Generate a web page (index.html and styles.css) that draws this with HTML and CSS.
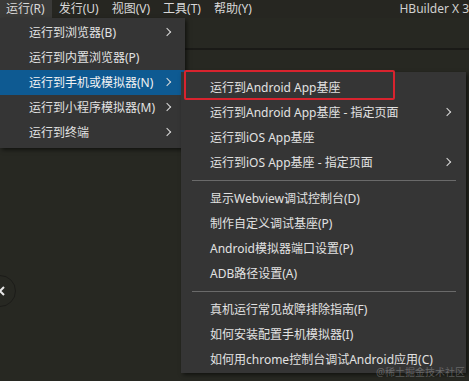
FILE: index.html
```html
<!DOCTYPE html>
<html lang="zh-CN">
    <head>
        <title>HBuilder X</title>
        <meta charset="utf-8">
        <link rel="stylesheet" href="styles.css">
    </head>
    <body>
        <header class="menubar">
            <span class="menubar-item open">运行(R)</span>
            <span class="menubar-item">发行(U)</span>
            <span class="menubar-item">视图(V)</span>
            <span class="menubar-item">工具(T)</span>
            <span class="menubar-item">帮助(Y)</span>
            <span class="app-title">HBuilder X 3</span>
        </header>
        <div class="toolbar"></div>
        <main class="workspace">
            <div class="side-toggle">
                <svg width="8" height="10" viewBox="0 0 8 10"><polyline points="6,1 2,5 6,9" fill="none" stroke="#e8e8e8" stroke-width="2"/></svg>
            </div>
        </main>

        <ul class="menu run-menu">
            <li class="menu-item">运行到浏览器(B)<span class="arrow"></span></li>
            <li class="menu-item">运行到内置浏览器(P)</li>
            <li class="menu-item active">运行到手机或模拟器(N)<span class="arrow"></span></li>
            <li class="menu-item">运行到小程序模拟器(M)<span class="arrow"></span></li>
            <li class="menu-item">运行到终端<span class="arrow"></span></li>
        </ul>

        <ul class="menu device-menu">
            <li class="menu-item">运行到Android App基座</li>
            <li class="menu-item">运行到Android App基座 - 指定页面<span class="arrow"></span></li>
            <li class="menu-item">运行到iOS App基座</li>
            <li class="menu-item">运行到iOS App基座 - 指定页面<span class="arrow"></span></li>
            <li class="separator"></li>
            <li class="menu-item">显示Webview调试控制台(D)</li>
            <li class="menu-item">制作自定义调试基座(P)</li>
            <li class="menu-item">Android模拟器端口设置(P)</li>
            <li class="menu-item">ADB路径设置(A)</li>
            <li class="separator"></li>
            <li class="menu-item">真机运行常见故障排除指南(F)</li>
            <li class="menu-item">如何安装配置手机模拟器(I)</li>
            <li class="menu-item">如何用chrome控制台调试Android应用(C)</li>
        </ul>

        <div class="highlight-box"></div>
        <div class="watermark">@稀土掘金技术社区</div>
    </body>
</html>
```
FILE: styles.css
```css
* {
    margin: 0;
    padding: 0;
    box-sizing: border-box;
}
body {
    width: 469px;
    height: 381px;
    overflow: hidden;
    position: relative;
    background-color: #272822;
    font-family: "Noto Sans", "Noto Sans CJK SC", sans-serif;
    font-size: 12px;
    color: #dcdcdc;
}
.menubar {
    height: 18px;
    display: flex;
    align-items: center;
    background-color: #262621;
    line-height: 18px;
}
.menubar-item {
    padding: 0 6px;
    margin-right: 1px;
    color: #d8d8d8;
}
.menubar-item.open {
    background-color: #3a3a38;
    padding: 0 7px 0 6px;
}
.app-title {
    margin-left: auto;
    margin-right: 0;
    color: #d0d0d0;
}
.toolbar {
    height: 32px;
    border-bottom: 1px solid #1a1a17;
    box-shadow: 0 -4px 0 -3px #1a1a17 inset;
    background-color: #272822;
}
.workspace {
    height: calc(100% - 50px);
    position: relative;
}
.side-toggle {
    position: absolute;
    left: -16px;
    top: 225px;
    width: 32px;
    height: 32px;
    border-radius: 50%;
    border: 1px solid #1c1c19;
    display: flex;
    align-items: center;
    justify-content: flex-end;
    padding-right: 9px;
}
.menu {
    list-style: none;
    position: absolute;
    background-color: #353535;
    box-shadow: 2px 2px 4px rgba(0, 0, 0, 0.55);
}
.run-menu {
    left: 0;
    top: 18px;
    width: 185px;
    padding: 2px 0 3px;
}
.device-menu {
    left: 181px;
    top: 72px;
    width: 285px;
    padding: 3px 0 1px;
}
.menu-item {
    height: 25px;
    line-height: 25px;
    padding-left: 29px;
    position: relative;
    color: #e2e2e2;
    white-space: nowrap;
}
.menu-item.active {
    background-color: #0e5a92;
    color: #f2f2f2;
}
.arrow {
    position: absolute;
    top: 8px;
    right: 13px;
    width: 9px;
    height: 9px;
}
.run-menu .arrow {
    right: 12px;
}
.arrow::before {
    content: "";
    position: absolute;
    left: 0;
    top: 1px;
    width: 5px;
    height: 5px;
    border-top: 1.5px solid #dadada;
    border-right: 1.5px solid #dadada;
    transform: rotate(45deg);
}
.separator {
    height: 11px;
    display: flex;
    align-items: center;
    padding: 0 10px 0 11px;
}
.separator::before {
    content: "";
    flex: 1;
    height: 1px;
    background-color: #6a6a6a;
}
.highlight-box {
    position: absolute;
    left: 184px;
    top: 70px;
    width: 211px;
    height: 30px;
    border: 2px solid #d8232e;
    border-radius: 2px;
}
.watermark {
    position: absolute;
    right: 4px;
    bottom: 2px;
    font-size: 10px;
    color: rgba(200, 200, 200, 0.35);
}
```
